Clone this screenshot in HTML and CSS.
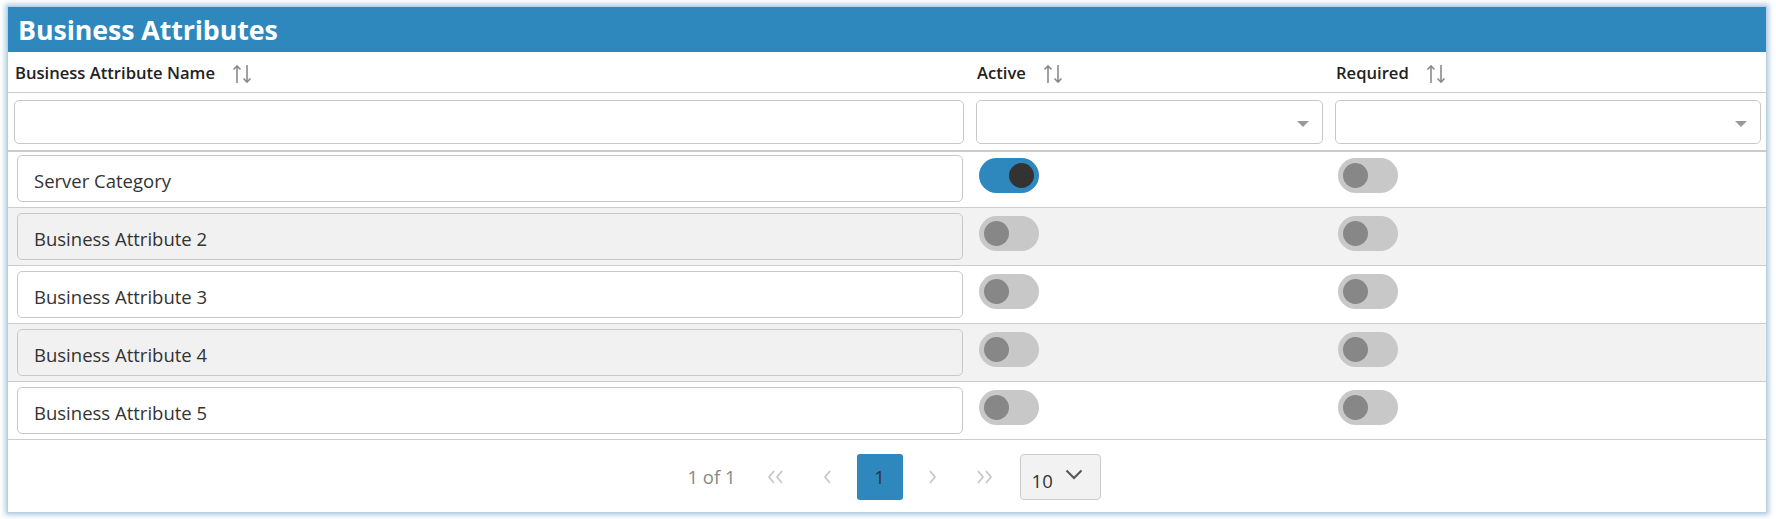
FILE: index.html
```html
<!DOCTYPE html>
<html lang="en">
<head>
<meta charset="utf-8">
<title>Business Attributes</title>
<link rel="stylesheet" href="styles.css">
</head>
<body>
<div class="page">
  <section class="panel">
    <header class="panel-title">Business Attributes</header>

    <div class="grid-row head-row">
      <div class="cell head-cell">Business Attribute Name
        <svg class="sort" width="20" height="20" viewBox="0 0 20 20"><path d="M5 19V2M1.5 5.5L5 2l3.5 3.5M15 1v17M11.5 14.5L15 18l3.5-3.5"/></svg>
      </div>
      <div class="cell head-cell">Active
        <svg class="sort" width="20" height="20" viewBox="0 0 20 20"><path d="M5 19V2M1.5 5.5L5 2l3.5 3.5M15 1v17M11.5 14.5L15 18l3.5-3.5"/></svg>
      </div>
      <div class="cell head-cell">Required
        <svg class="sort" width="20" height="20" viewBox="0 0 20 20"><path d="M5 19V2M1.5 5.5L5 2l3.5 3.5M15 1v17M11.5 14.5L15 18l3.5-3.5"/></svg>
      </div>
    </div>

    <div class="grid-row filter-row">
      <div class="cell filter-cell"><div class="filter-input"></div></div>
      <div class="cell filter-cell"><div class="filter-input select"><span class="caret"></span></div></div>
      <div class="cell filter-cell last"><div class="filter-input select"><span class="caret"></span></div></div>
    </div>

    <div class="rows">
      <div class="grid-row data-row first">
        <div class="cell name-cell"><div class="text-input">Server Category</div></div>
        <div class="cell toggle-cell"><span class="toggle on"><span class="knob"></span></span></div>
        <div class="cell toggle-cell"><span class="toggle"><span class="knob"></span></span></div>
      </div>
      <div class="grid-row data-row alt">
        <div class="cell name-cell"><div class="text-input">Business Attribute 2</div></div>
        <div class="cell toggle-cell"><span class="toggle"><span class="knob"></span></span></div>
        <div class="cell toggle-cell"><span class="toggle"><span class="knob"></span></span></div>
      </div>
      <div class="grid-row data-row">
        <div class="cell name-cell"><div class="text-input">Business Attribute 3</div></div>
        <div class="cell toggle-cell"><span class="toggle"><span class="knob"></span></span></div>
        <div class="cell toggle-cell"><span class="toggle"><span class="knob"></span></span></div>
      </div>
      <div class="grid-row data-row alt">
        <div class="cell name-cell"><div class="text-input">Business Attribute 4</div></div>
        <div class="cell toggle-cell"><span class="toggle"><span class="knob"></span></span></div>
        <div class="cell toggle-cell"><span class="toggle"><span class="knob"></span></span></div>
      </div>
      <div class="grid-row data-row">
        <div class="cell name-cell"><div class="text-input">Business Attribute 5</div></div>
        <div class="cell toggle-cell"><span class="toggle"><span class="knob"></span></span></div>
        <div class="cell toggle-cell"><span class="toggle"><span class="knob"></span></span></div>
      </div>
    </div>

    <footer class="pager">
      <span class="pager-count">1 of 1</span>
      <span class="pager-nav first-btn">
        <svg width="18" height="14" viewBox="0 0 18 14"><path d="M7 1L2 7l5 6M15 1l-5 6 5 6"/></svg>
      </span>
      <span class="pager-nav">
        <svg width="10" height="14" viewBox="0 0 10 14"><path d="M7 1L2 7l5 6"/></svg>
      </span>
      <span class="pager-page">1</span>
      <span class="pager-nav">
        <svg width="10" height="14" viewBox="0 0 10 14"><path d="M3 1l5 6-5 6"/></svg>
      </span>
      <span class="pager-nav last-btn">
        <svg width="18" height="14" viewBox="0 0 18 14"><path d="M3 1l5 6-5 6M11 1l5 6-5 6"/></svg>
      </span>
      <span class="page-size">
        <span class="page-size-value">10</span>
        <svg class="chev" width="18" height="11" viewBox="0 0 18 11"><path d="M1.5 1.5L9 9l7.5-7.5"/></svg>
      </span>
    </footer>
  </section>
</div>
</body>
</html>
```

FILE: styles.css
```css
* { box-sizing: border-box; }

html, body {
  margin: 0;
  padding: 0;
  background: #ffffff;
}

body {
  font-family: "Open Sans", "Noto Sans", "Liberation Sans", sans-serif;
  color: #333333;
}

.page {
  padding: 6px 9px 7px 7px;
}

.panel {
  width: 1760px;
  background: #ffffff;
  border: 1px solid #b9cfe2;
  box-shadow: 0 0 5px 2px rgba(110, 160, 205, 0.55);
  display: flex;
  flex-direction: column;
}

.panel-title {
  height: 45px;
  background: #2e87bd;
  color: #ffffff;
  font-weight: 700;
  font-size: 26.8px;
  line-height: 45px;
  padding-left: 10px;
  letter-spacing: -0.1px;
}

.grid-row {
  display: grid;
  grid-template-columns: 962px 359px 1fr;
}

.head-row {
  height: 41px;
  border-bottom: 1px solid #cccccc;
}

.head-cell {
  display: flex;
  align-items: center;
  padding-left: 7px;
  font-size: 16.6px;
  font-weight: 600;
  color: #222222;
  padding-top: 1px;
}

.sort {
  margin-left: 17px;
  margin-top: 3px;
  fill: none;
  stroke: #8a8a8a;
  stroke-width: 1.6;
}

.filter-row {
  height: 59px;
  border-bottom: 2px solid #cccccc;
}

.filter-cell {
  padding: 7px 6px 6px 6px;
}

.filter-cell.last {
  padding-right: 5px;
}

.filter-input {
  height: 44px;
  border: 1px solid #c8c8c8;
  border-radius: 5px;
  background: #ffffff;
}

.select {
  display: flex;
  align-items: center;
  justify-content: flex-end;
  padding-right: 13px;
}

.caret {
  width: 0;
  height: 0;
  border-left: 6px solid transparent;
  border-right: 6px solid transparent;
  border-top: 6px solid #999999;
  margin-top: 3px;
}

.data-row {
  height: 58px;
  padding: 5px 0;
  border-bottom: 1px solid #cccccc;
}

.data-row.first {
  height: 56px;
  padding-top: 3px;
}

.data-row.alt {
  background: #f2f2f2;
}

.name-cell {
  padding: 0 7px 0 9px;
}

.text-input {
  height: 47px;
  border: 1px solid #c8c8c8;
  border-radius: 5px;
  background: #ffffff;
  font-size: 18.5px;
  line-height: 45px;
  padding-left: 16px;
  padding-top: 2px;
  color: #333333;
}

.alt .text-input {
  background: #f1f1f1;
}

.toggle-cell {
  padding: 3px 0 0 9px;
}

.toggle {
  display: flex;
  align-items: center;
  width: 60px;
  height: 35px;
  border-radius: 18px;
  background: #c8c8c8;
  padding: 0 5px;
}

.toggle .knob {
  width: 25px;
  height: 25px;
  border-radius: 50%;
  background: #878787;
}

.toggle.on {
  background: #2e87bd;
  justify-content: flex-end;
}

.toggle.on .knob {
  background: #333333;
}

.pager {
  height: 72px;
  display: flex;
  align-items: center;
  justify-content: center;
  padding-left: 14px;
  padding-top: 1px;
}

.pager-count {
  font-size: 18.5px;
  color: #888888;
  margin-right: 17px;
}

.pager-nav {
  width: 46px;
  height: 46px;
  display: flex;
  align-items: center;
  justify-content: center;
  margin-right: 6px;
}

.pager-nav svg {
  fill: none;
  stroke: #c4c4c4;
  stroke-width: 1.6;
}

.pager-nav.last-btn {
  margin-right: 13px;
}

.pager-page {
  width: 46px;
  height: 46px;
  background: #2e87bd;
  border-radius: 3px;
  color: #333333;
  font-size: 18.5px;
  display: flex;
  align-items: center;
  justify-content: center;
  margin-right: 6px;
}

.page-size {
  width: 81px;
  height: 46px;
  background: #f2f2f2;
  border: 1px solid #cccccc;
  border-radius: 4px;
  display: flex;
  align-items: center;
  padding-left: 11px;
}

.page-size-value {
  font-size: 18.5px;
  color: #333333;
  margin-top: 7px;
}

.chev {
  margin-left: 12px;
  margin-top: -4px;
  fill: none;
  stroke: #555555;
  stroke-width: 2;
}
```
